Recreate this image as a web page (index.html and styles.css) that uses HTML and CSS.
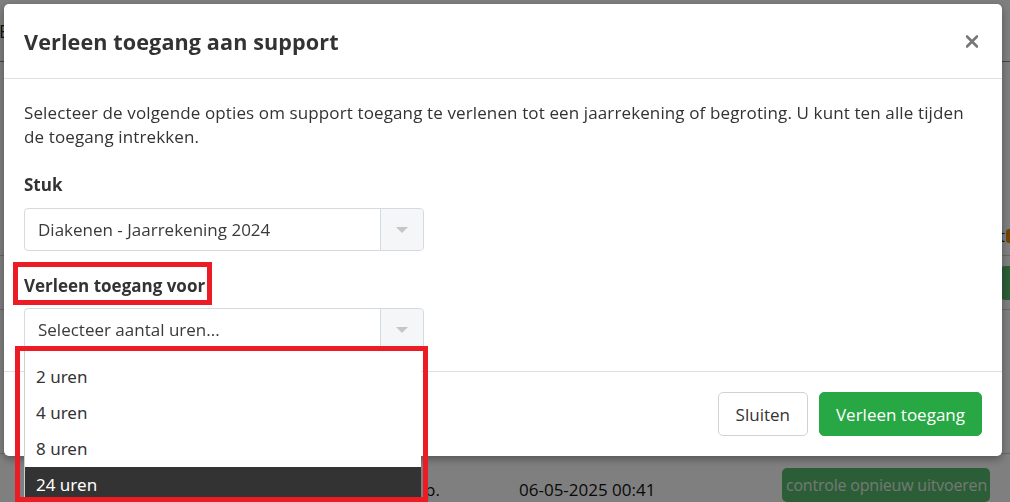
FILE: index.html
```html
<!DOCTYPE html>
<html lang="nl">
<head>
<meta charset="utf-8">
<title>Verleen toegang aan support</title>
<link rel="stylesheet" href="styles.css">
</head>
<body>
<div class="page">
  <div class="page-top"><span class="page-top-letter">E</span></div>
  <div class="page-row page-row-tall">
    <span class="page-status">correct<span class="page-status-icon"></span></span>
  </div>
  <div class="page-row page-row-btn">
    <span class="page-btn page-btn-edge"></span>
  </div>
  <div class="page-row page-row-mid"></div>
  <div class="page-row page-row-last">
    <span class="page-cell-a">Jaarrekening 2024 ter goedk. p.</span>
    <span class="page-cell-b">06-05-2025 00:41</span>
    <span class="page-btn page-btn-run">controle opnieuw uitvoeren</span>
  </div>
</div>

<div class="backdrop"></div>

<div class="modal">
  <div class="modal-header">
    <h2 class="modal-title">Verleen toegang aan support</h2>
    <button class="modal-close" aria-label="Sluiten">
      <svg width="12" height="13" viewBox="0 0 12 13"><path d="M1 1.5 L11 11.5 M11 1.5 L1 11.5" stroke="#777" stroke-width="2.6" stroke-linecap="round"/></svg>
    </button>
  </div>
  <div class="modal-body">
    <p class="intro">Selecteer de volgende opties om support toegang te verlenen tot een jaarrekening of begroting. U kunt ten alle tijden de toegang intrekken.</p>
    <div class="field-label field-label-first">Stuk</div>
    <div class="select">
      <span class="select-value">Diakenen - Jaarrekening 2024</span>
      <span class="select-arrow"><svg width="12" height="6" viewBox="0 0 12 6"><path d="M0 0 H12 L6 6 Z" fill="#c4c6ca"/></svg></span>
    </div>
    <div class="field-label field-label-second">Verleen toegang voor</div>
    <div class="select">
      <span class="select-value">Selecteer aantal uren...</span>
      <span class="select-arrow"><svg width="12" height="6" viewBox="0 0 12 6"><path d="M0 0 H12 L6 6 Z" fill="#c4c6ca"/></svg></span>
    </div>
  </div>
  <div class="modal-footer">
    <button class="btn btn-light">Sluiten</button>
    <button class="btn btn-green">Verleen toegang</button>
  </div>
</div>

<ul class="dropdown">
  <li class="option">2 uren</li>
  <li class="option">4 uren</li>
  <li class="option">8 uren</li>
  <li class="option option-active">24 uren</li>
</ul>

<div class="mark mark-label"></div>
<div class="mark mark-list"></div>
</body>
</html>
```
FILE: styles.css
```css
html, body {
  margin: 0;
  padding: 0;
}
body {
  width: 1010px;
  height: 502px;
  overflow: hidden;
  font-family: "Open Sans", "Noto Sans", sans-serif;
  color: #333;
  background: #fff;
}

/* background page */
.page {
  height: 502px;
  display: flex;
  flex-direction: column;
}
.page-top {
  height: 62px;
  border-bottom: 1px solid #8a8a8a;
  display: flex;
  align-items: center;
  font-size: 18px;
  color: #222;
}
.page-top-letter {
  margin-left: -1px;
}
.page-row {
  border-bottom: 1px solid #d0d0d0;
  display: flex;
  align-items: center;
}
.page-row-tall {
  height: 196px;
  justify-content: flex-end;
  align-items: flex-end;
}
.page-status {
  font-size: 16px;
  color: #222;
  margin-right: -4px;
  margin-bottom: 8px;
  display: flex;
  align-items: center;
}
.page-status-icon {
  width: 8px;
  height: 14px;
  background: #e58a00;
  border-radius: 3px;
  margin-left: 1px;
}
.page-row-btn {
  height: 54px;
  justify-content: flex-end;
}
.page-btn {
  background: #57bb6c;
  color: #fff;
  border-radius: 5px;
  font-size: 16px;
  height: 34px;
  display: flex;
  align-items: center;
  white-space: nowrap;
}
.page-btn-edge {
  width: 40px;
  margin-right: -30px;
}
.page-row-mid {
  height: 145px;
}
.page-row-last {
  border-bottom: none;
  padding-top: 14px;
  align-items: flex-start;
  font-size: 17px;
  color: #111;
  white-space: nowrap;
}
.page-cell-a {
  width: 440px;
  text-align: right;
  margin-top: 10px;
}
.page-cell-b {
  margin-left: 79px;
  margin-top: 10px;
}
.page-btn-run {
  margin-left: 127px;
  width: 208px;
  justify-content: center;
  color: #e6f1e8;
  letter-spacing: -0.2px;
}

.backdrop {
  position: fixed;
  inset: 0;
  background: rgba(0, 0, 0, 0.5);
}

/* modal */
.modal {
  position: fixed;
  top: 4px;
  left: 4px;
  width: 998px;
  height: 452px;
  background: #fff;
  border-radius: 5px;
  box-shadow: 0 3px 8px rgba(0, 0, 0, 0.35);
  display: flex;
  flex-direction: column;
}
.modal-header {
  height: 74px;
  border-bottom: 1px solid #dfe1e5;
  display: flex;
  align-items: center;
  justify-content: space-between;
  padding: 0 24px 0 20px;
}
.modal-title {
  margin: 0;
  font-size: 21.6px;
  font-weight: 700;
  color: #333;
  letter-spacing: 0.1px;
}
.modal-close {
  border: 0;
  background: none;
  padding: 0;
  display: flex;
  margin-top: 1px;
}
.modal-body {
  padding: 22px 20px 20px;
  font-size: 17px;
  line-height: 24px;
}
.intro {
  margin: 0 0 24px;
  letter-spacing: 0.12px;
}
.field-label {
  font-weight: 700;
  margin-bottom: 11px;
}
.field-label-second {
  margin-top: 23px;
  margin-bottom: 10px;
}
.select {
  width: 400px;
  height: 43px;
  box-sizing: border-box;
  border: 1px solid #d6d9de;
  border-radius: 4px;
  display: flex;
}
.select-value {
  flex: 1;
  display: flex;
  align-items: center;
  padding-left: 13px;
  color: #3a3a3a;
}
.select-arrow {
  width: 42px;
  border-left: 1px solid #d6d9de;
  background: #f5f6f8;
  border-radius: 0 4px 4px 0;
  display: flex;
  align-items: center;
  justify-content: center;
}
.modal-footer {
  margin-top: auto;
  border-top: 1px solid #dfe1e5;
  padding: 20px;
  display: flex;
  justify-content: flex-end;
  gap: 11px;
}
.btn {
  height: 44px;
  border-radius: 5px;
  font-family: inherit;
  font-size: 17px;
  padding: 0 16px;
  cursor: pointer;
}
.btn-light {
  background: #fff;
  border: 1px solid #cfd2d6;
  color: #333;
  padding: 0 17px;
}
.btn-green {
  background: #28a745;
  border: 1px solid #28a745;
  color: #fff;
}

/* open dropdown list */
.dropdown {
  position: fixed;
  left: 24px;
  top: 351px;
  width: 397px;
  margin: 0;
  padding: 8px 0 0;
  list-style: none;
  background: #fff;
  border-left: 1px solid #cfcfcf;
  box-sizing: border-box;
  font-family: "Noto Sans", "Open Sans", sans-serif;
  font-size: 17px;
}
.option {
  height: 36px;
  line-height: 36px;
  padding-left: 11px;
  color: #333;
}
.option-active {
  background: #333;
  color: #fff;
}

/* annotation frames */
.mark {
  position: fixed;
  border: 5px solid #ec1c24;
  box-sizing: border-box;
}
.mark-label {
  left: 13px;
  top: 262px;
  width: 199px;
  height: 43px;
}
.mark-list {
  left: 15px;
  top: 346px;
  width: 413px;
  height: 156px;
}
```
